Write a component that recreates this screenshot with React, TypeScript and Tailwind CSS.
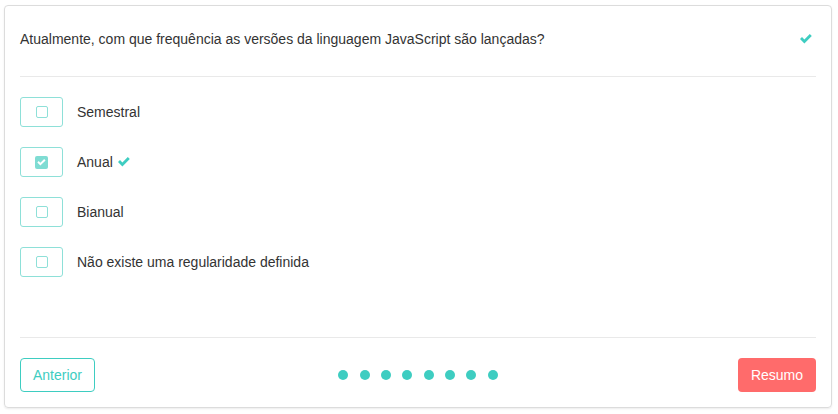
const options = [
  { label: "Semestral", checked: false },
  { label: "Anual", checked: true },
  { label: "Bianual", checked: false },
  { label: "Não existe uma regularidade definida", checked: false },
];

const Check = ({ className = "" }: { className?: string }) => (
  <svg viewBox="0 0 12 10" className={className} fill="currentColor">
    <path d="M0 5 L2 3 L4.4 5.4 L9.8 0 L11.8 2 L4.4 9.4 Z" />
  </svg>
);

export default function App() {
  return (
    <div className="p-1 pt-[5px] bg-white" style={{ fontFamily: '"Liberation Sans", Arial, sans-serif' }}>
      <div className="w-[828px] h-[403px] border border-[#dcdcdc] rounded-[4px] shadow-[0_1px_2px_rgba(0,0,0,0.08)] px-[15px] flex flex-col">
        {/* pergunta */}
        <div className="flex items-center justify-between pt-[23px] pb-[27px]">
          <p className="text-[14px] leading-5 text-[#333]">
            Atualmente, com que frequência as versões da linguagem JavaScript são lançadas?
          </p>
          <Check className="w-[12px] h-[10px] text-[#3ecdc1] mr-[4px]" />
        </div>
        <div className="h-px bg-[#e9e9e9]" />

        {/* opções */}
        <div className="flex flex-col gap-5 pt-5">
          {options.map((o) => (
            <div key={o.label} className="flex items-center h-[30px]">
              <div className="w-[43px] h-[30px] border border-[#8ee0d8] rounded-[3px] flex items-center justify-center">
                {o.checked ? (
                  <div className="w-[13px] h-[13px] rounded-[2px] bg-[#7fdcd3] flex items-center justify-center">
                    <Check className="w-[9px] h-[7px] text-white" />
                  </div>
                ) : (
                  <div className="w-[12px] h-[12px] rounded-[2px] border border-[#8ee0d8]" />
                )}
              </div>
              <span className="ml-[14px] text-[14px] text-[#333] flex items-center gap-[5px]">
                {o.label}
                {o.checked && <Check className="w-[12px] h-[10px] text-[#3ecdc1]" />}
              </span>
            </div>
          ))}
        </div>

        <div className="h-px bg-[#e9e9e9] mt-[60px]" />

        {/* navegação */}
        <div className="flex items-center pt-5">
          <div className="flex-1">
            <button className="h-[34px] px-3 border border-[#3ecdc1] rounded-[4px] text-[14px] text-[#3ecdc1] bg-white">
              Anterior
            </button>
          </div>
          <div className="flex gap-[11.4px]">
            {Array.from({ length: 8 }).map((_, i) => (
              <span key={i} className="w-[10px] h-[10px] rounded-full bg-[#3ecdc1]" />
            ))}
          </div>
          <div className="flex-1 flex justify-end">
            <button className="h-[34px] px-[13px] rounded-[4px] text-[14px] text-white bg-[#ff6b6b]">
              Resumo
            </button>
          </div>
        </div>
      </div>
    </div>
  );
}
